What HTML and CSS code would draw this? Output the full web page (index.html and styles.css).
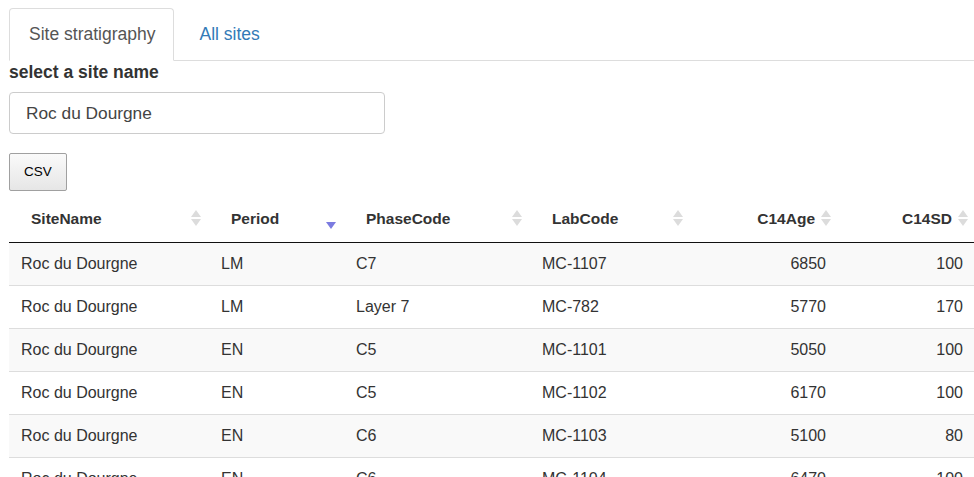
FILE: index.html
```html
<!DOCTYPE html>
<html>
<head>
<meta charset="utf-8">
<link rel="stylesheet" href="styles.css">
</head>
<body>
<div class="page">
  <ul class="tabs">
    <li class="tab active">Site stratigraphy</li>
    <li class="tab">All sites</li>
  </ul>
  <label class="field-label">select a site name</label>
  <div class="select-box">Roc du Dourgne</div>
  <button class="csv-btn">CSV</button>
  <div class="table-wrap">
  <table class="data">
    <colgroup>
      <col class="c1"><col class="c2"><col class="c3"><col class="c4"><col class="c5"><col class="c6">
    </colgroup>
    <thead>
      <tr>
        <th>SiteName<span class="sort"></span></th>
        <th>Period<span class="sort desc"></span></th>
        <th>PhaseCode<span class="sort"></span></th>
        <th>LabCode<span class="sort"></span></th>
        <th class="num">C14Age<span class="sort"></span></th>
        <th class="num">C14SD<span class="sort"></span></th>
      </tr>
    </thead>
    <tbody>
      <tr><td>Roc du Dourgne</td><td>LM</td><td>C7</td><td>MC-1107</td><td class="num">6850</td><td class="num">100</td></tr>
      <tr><td>Roc du Dourgne</td><td>LM</td><td>Layer 7</td><td>MC-782</td><td class="num">5770</td><td class="num">170</td></tr>
      <tr><td>Roc du Dourgne</td><td>EN</td><td>C5</td><td>MC-1101</td><td class="num">5050</td><td class="num">100</td></tr>
      <tr><td>Roc du Dourgne</td><td>EN</td><td>C5</td><td>MC-1102</td><td class="num">6170</td><td class="num">100</td></tr>
      <tr><td>Roc du Dourgne</td><td>EN</td><td>C6</td><td>MC-1103</td><td class="num">5100</td><td class="num">80</td></tr>
      <tr><td>Roc du Dourgne</td><td>EN</td><td>C6</td><td>MC-1104</td><td class="num">6470</td><td class="num">100</td></tr>
    </tbody>
  </table>
  </div>
</div>
</body>
</html>
```

FILE: styles.css
```css
html, body {
  margin: 0;
  padding: 0;
  background: #fff;
  overflow: hidden;
}
body {
  font-family: "Liberation Sans", Arial, sans-serif;
  font-size: 16px;
  color: #333;
  line-height: 22.8px;
}
.page {
  padding: 8px 0 0 9px;
}
.tabs {
  list-style: none;
  margin: 0;
  padding: 0;
  display: flex;
  border-bottom: 1px solid #ddd;
  font-size: 17.5px;
}
.tab {
  padding: 14px 22px 14px 22px;
  margin-right: 2px;
  margin-bottom: -1px;
  color: #337ab7;
  border: 1px solid transparent;
  border-radius: 4px 4px 0 0;
}
.tab.active {
  color: #555;
  background: #fff;
  border-color: #ddd;
  border-bottom-color: #fff;
  padding: 14px 18px 14px 19px;
}
.field-label {
  display: block;
  font-weight: bold;
  font-size: 17.5px;
  margin: 0 0 8px 0;
}
.select-box {
  width: 358px;
  height: 40px;
  border: 1px solid #ccc;
  border-radius: 4px;
  padding: 0 0 0 16px;
  font-size: 17.3px;
  line-height: 40px;
  color: #444;
}
.csv-btn {
  display: block;
  margin-top: 19px;
  width: 58px;
  height: 38px;
  border: 1px solid #a0a0a0;
  border-radius: 2px;
  background: linear-gradient(#fafafa, #e6e6e6);
  font-family: "Liberation Sans", Arial, sans-serif;
  font-size: 13.5px;
  color: #000;
  padding: 0;
}
.table-wrap {
  margin-top: 5px;
  width: 967px;
}
.data {
  border-collapse: collapse;
  table-layout: fixed;
  width: 967px;
}
.c1 { width: 200px; }
.c2 { width: 135px; }
.c3 { width: 186px; }
.c4 { width: 161px; }
.c5 { width: 148px; }
.c6 { width: 137px; }
.data th {
  position: relative;
  text-align: left;
  font-weight: bold;
  font-size: 15.5px;
  padding: 12px 24px 12px 22px;
  line-height: 22px;
  border-bottom: 1px solid #111;
  color: #333;
}
.data th.num {
  text-align: right;
}
.data td {
  padding: 10px 12px;
  line-height: 22px;
  border-top: 1px solid #ddd;
  white-space: nowrap;
}
.data tbody tr:first-child td {
  border-top: none;
}
.data tbody tr:nth-child(odd) td {
  background: #f9f9f9;
}
.data td.num {
  text-align: right;
  padding-right: 13px;
}
.sort {
  position: absolute;
  right: 8px;
  top: 13px;
  width: 10px;
  height: 20px;
}
.sort::before, .sort::after {
  content: "";
  position: absolute;
  left: 0;
  border-left: 5px solid transparent;
  border-right: 5px solid transparent;
}
.sort::before {
  top: 1px;
  border-bottom: 7px solid #dcdcdc;
}
.sort::after {
  top: 10px;
  border-top: 7px solid #dcdcdc;
}
.sort.desc::before {
  display: none;
}
.sort.desc::after {
  top: 13px;
  border-top: 7px solid #7b7be0;
}
```
